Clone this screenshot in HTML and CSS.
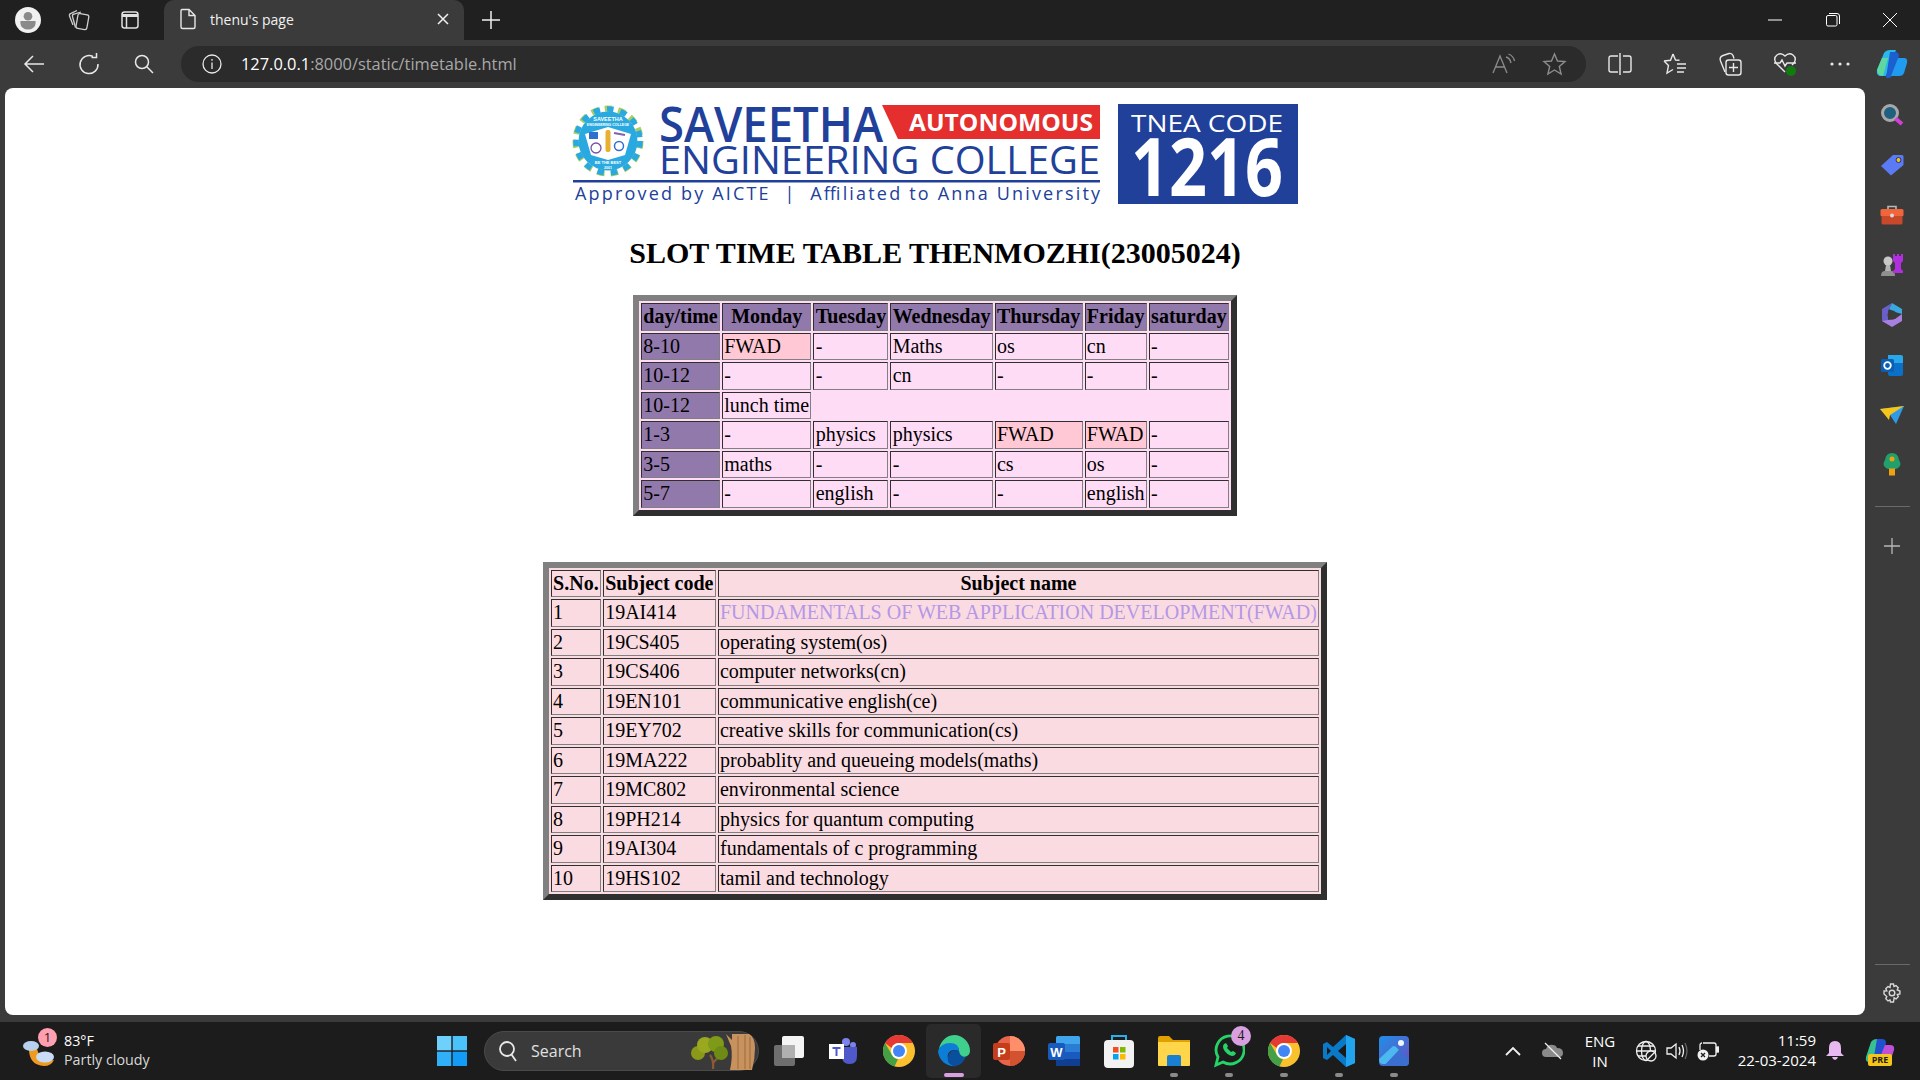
FILE: index.html
```html
<!DOCTYPE html>
<html lang="en">
<head>
    <meta charset="UTF-8">
    <title>thenu's page</title>
    <link rel="stylesheet" href="styles.css">
</head>
<body>
<!-- title bar -->
<div class="titlebar">
    <div class="bar-btn"><svg width="26" height="26" viewBox="0 0 24 24"><circle cx="12" cy="12" r="12" fill="#f1f1f1"/><circle cx="12" cy="8.500" r="4" fill="#8a8a8a"/><path d="M5 13h14v2a6 5 0 0 1-14 0z" fill="#8a8a8a"/></svg></div>
    <div class="bar-btn"><svg width="24" height="24" viewBox="0 0 24 24" fill="none" stroke="#cfcfcf" stroke-width="1.300"><rect x="10" y="6" width="11" height="15" rx="2" transform="rotate(10 15 13)"/><path d="M8.500 19.500 5.500 8.500Q5 6.500 7 6L14 4M6 17 2.500 8Q2 6 4 5.300L10 2.500"/></svg></div>
    <div class="bar-btn"><svg width="20" height="20" viewBox="0 0 20 20" fill="none" stroke="#e0e0e0" stroke-width="1.500"><rect x="2" y="2" width="16" height="16" rx="2.500"/><path d="M2 5.500h16" stroke-width="3"/><path d="M6.500 6v12"/></svg></div>
    <div class="tab">
        <svg width="18" height="22" viewBox="0 0 18 22" fill="none" stroke="#e8e8e8" stroke-width="1.400"><path d="M3 1.500h7l6 6V19a1.500 1.500 0 0 1-1.500 1.500h-11A1.500 1.500 0 0 1 2 19V3a1.500 1.500 0 0 1 1-1.500zM10 1.500V7.500h6"/></svg>
        <span class="tab-title">thenu's page</span>
        <svg class="tab-close" width="12" height="12" viewBox="0 0 12 12" stroke="#f0f0f0" stroke-width="1.500"><path d="M1 1l10 10M11 1 1 11"/></svg>
    </div>
    <div class="new-tab"><svg width="20" height="20" viewBox="0 0 20 20" stroke="#f0f0f0" stroke-width="1.500"><path d="M10 1v18M1 10h18"/></svg></div>
    <div class="win-controls">
        <div class="win-btn"><svg width="14" height="14" viewBox="0 0 14 14" stroke="#fff"><path d="M0 7h14"/></svg></div>
        <div class="win-btn"><svg width="14" height="14" viewBox="0 0 14 14" fill="none" stroke="#fff"><rect x="0.500" y="2.500" width="10.500" height="10.500" rx="1.500"/><path d="M3 .5h8a2.500 2.500 0 0 1 2.500 2.500v8"/></svg></div>
        <div class="win-btn"><svg width="14" height="14" viewBox="0 0 14 14" stroke="#fff"><path d="M0 0l14 14M14 0 0 14"/></svg></div>
    </div>
</div>

<!-- address bar -->
<div class="toolbar">
    <div class="tool-btn"><svg width="22" height="20" viewBox="0 0 22 20" fill="none" stroke="#e8e8e8" stroke-width="1.500"><path d="M21 10H2M10 2l-8 8 8 8"/></svg></div>
    <div class="tool-btn"><svg width="22" height="22" viewBox="0 0 22 22" fill="none" stroke="#e8e8e8" stroke-width="1.500"><path d="M15 3.500A9 9 0 1 0 20 11"/><path d="M15.500 0v5h-5" transform="translate(3 -.5)"/></svg></div>
    <div class="tool-btn"><svg width="20" height="20" viewBox="0 0 20 20" fill="none" stroke="#e8e8e8" stroke-width="1.500"><circle cx="8" cy="8" r="6.500"/><path d="M12.800 12.800 19 19"/></svg></div>
    <div class="address">
        <svg width="20" height="20" viewBox="0 0 20 20" fill="none" stroke="#e8e8e8" stroke-width="1.300"><circle cx="10" cy="10" r="9"/><path d="M10 8.500V15M10 5v1.800"/></svg>
        <span class="url"><span class="url-host">127.0.0.1</span>:8000/static/timetable.html</span>
        <div class="address-right">
            <svg width="24" height="22" viewBox="0 0 24 22" fill="none" stroke="#8c8c8c" stroke-width="1.300"><path d="M1 20 8 3l7 17M3.500 14h9M14 4q4 1 5 6M16.500 1q5 2 6 7"/></svg>
            <svg width="25" height="24" viewBox="0 0 25 24" fill="none" stroke="#8c8c8c" stroke-width="1.400"><path d="M12.500 2l3 7 7.500.6-5.700 4.900 1.800 7.500-6.600-4-6.600 4 1.800-7.500L2 9.600 9.500 9z"/></svg>
        </div>
    </div>
    <div class="tool-right">
        <div class="tool-btn"><svg width="24" height="22" viewBox="0 0 24 22" fill="none" stroke="#e8e8e8" stroke-width="1.400"><path d="M10 3H3a2 2 0 0 0-2 2v12a2 2 0 0 0 2 2h7M12 0v22M15 3h6a2 2 0 0 1 2 2v12a2 2 0 0 1-2 2h-6"/></svg></div>
        <div class="tool-btn"><svg width="24" height="24" viewBox="0 0 24 24" fill="none" stroke="#e8e8e8" stroke-width="1.400"><path d="M10 2l2.500 6 4 .3M1 9l6.500-.7L10 2M1 9l4.500 4.500L4 21l6-3.500M14 12h9M14 16h9M14 20h7"/></svg></div>
        <div class="tool-btn"><svg width="24" height="24" viewBox="0 0 24 24" fill="none" stroke="#e8e8e8" stroke-width="1.400"><path d="M7 20 2.500 9Q1 5 5 3.500L11 1.500q3-.5 4 2l1 3"/><rect x="8" y="8" width="15" height="15" rx="2.500"/><path d="M15.500 11v9M11 15.500h9"/></svg></div>
        <div class="tool-btn"><svg width="26" height="26" viewBox="0 0 26 26" fill="none" stroke="#e8e8e8" stroke-width="1.400"><path d="M13 21 4 12Q1 7 5 4t8 1q4-4 8-1t1 8l-2 2"/><path d="M2 12h6l2-3 3 6 2-3h9"/><circle cx="19" cy="20" r="5" fill="#107c10" stroke="none"/></svg></div>
        <div class="tool-btn"><svg width="20" height="4" viewBox="0 0 20 4" fill="#e8e8e8"><circle cx="2" cy="2" r="1.600"/><circle cx="10" cy="2" r="1.600"/><circle cx="18" cy="2" r="1.600"/></svg></div>
        <div class="copilot-btn"><svg width="32" height="28" viewBox="0 0 32 28"><path d="M8 3q2-3 6-3h6L10 26H5Q0 26 1 20z" fill="#2bb8e8"/><path d="M1 20 6 8h6l-5 18Q2 26 1 20z" fill="#5fd8a0"/><path d="M14 2h5q4 0 4 4l-7 20q-1 2-5 2h-1z" fill="#1b5fd0"/><path d="M22 8h6q4 0 3 5l-3 10q-1 3-5 3h-8z" fill="#1f9cf0"/></svg></div>
    </div>
</div>

<div class="middle">
    <!-- the page itself -->
    <main class="page">
        <div class="logo">
            <svg class="logo-svg" width="726" height="100" viewBox="0 0 726 100">
                <!-- emblem -->
                <circle cx="36" cy="37" r="32.500" fill="none" stroke="#a8cf60" stroke-width="6" stroke-dasharray="7.500 6.100"/>
                <circle cx="36" cy="37" r="32" fill="none" stroke="#29a9e0" stroke-width="5.500" stroke-dasharray="6.500 7.100"/>
                <circle cx="36" cy="37" r="29.500" fill="#29a9e0"/>
                <path d="M13 30l23-7 23 7-6 21-17 5-17-5z" fill="#fff"/>
                <rect x="17" y="28" width="9" height="7" fill="#2f6fd0"/>
                <rect x="33.500" y="26" width="5" height="22" rx="2" fill="#e8b030"/>
                <circle cx="24" cy="44" r="5" fill="none" stroke="#7a4fa8" stroke-width="1.300"/>
                <circle cx="47" cy="42" r="4.500" fill="none" stroke="#2f6fd0" stroke-width="1.500"/>
                <path d="M42 29l11 2" stroke="#8060b0" stroke-width="2"/>
                <text class="logo-tiny" x="36" y="16.500" font-size="5.500">SAVEETHA</text>
                <text class="logo-tiny" x="36" y="22" font-size="3.500">ENGINEERING COLLEGE</text>
                <text class="logo-tiny" x="36" y="60" font-size="4">BE THE BEST</text>
                <text class="logo-tiny" x="36" y="65" font-size="3.500">2001</text>
                <!-- name -->
                <text class="logo-big logo-name" x="87" y="38" font-size="49" textLength="224" lengthAdjust="spacingAndGlyphs">SAVEETHA</text>
                <path d="M310 1H528V35H326z" fill="#e52e2e"/>
                <text class="logo-auto" x="337" y="27" textLength="184" lengthAdjust="spacingAndGlyphs">AUTONOMOUS</text>
                <text class="logo-big" x="87" y="70" font-size="38" textLength="441" lengthAdjust="spacingAndGlyphs">ENGINEERING COLLEGE</text>
                <rect x="1" y="76" width="527" height="2.500" fill="#21409a"/>
                <text class="logo-small" x="3" y="96" textLength="525" lengthAdjust="spacing">Approved by AICTE  |  Affiliated to Anna University</text>
                <!-- code box -->
                <rect x="546" y="0" width="180" height="100" fill="#21409a"/>
                <text class="logo-code" x="559" y="28" textLength="152" lengthAdjust="spacingAndGlyphs">TNEA CODE</text>
                <text class="logo-num" x="559" y="92" textLength="152" lengthAdjust="spacingAndGlyphs">1216</text>
            </svg>
        </div>
        <h1 class="heading">SLOT TIME TABLE THENMOZHI(23005024)</h1>

        <table class="slots">
            <tr>
                <th>day/time</th><th>Monday</th><th>Tuesday</th><th>Wednesday</th><th>Thursday</th><th>Friday</th><th>saturday</th>
            </tr>
            <tr>
                <td class="slot-time">8-10</td><td class="fwad">FWAD</td><td>-</td><td>Maths</td><td>os</td><td>cn</td><td>-</td>
            </tr>
            <tr>
                <td class="slot-time">10-12</td><td>-</td><td>-</td><td>cn</td><td>-</td><td>-</td><td>-</td>
            </tr>
            <tr>
                <td class="slot-time">10-12</td><td>lunch time</td>
            </tr>
            <tr>
                <td class="slot-time">1-3</td><td>-</td><td>physics</td><td>physics</td><td class="fwad">FWAD</td><td class="fwad">FWAD</td><td>-</td>
            </tr>
            <tr>
                <td class="slot-time">3-5</td><td>maths</td><td>-</td><td>-</td><td>cs</td><td>os</td><td>-</td>
            </tr>
            <tr>
                <td class="slot-time">5-7</td><td>-</td><td>english</td><td>-</td><td>-</td><td>english</td><td>-</td>
            </tr>
        </table>

        <table class="subjects">
            <tr><th>S.No.</th><th>Subject code</th><th>Subject name</th></tr>
            <tr><td>1</td><td>19AI414</td><td class="subject-main">FUNDAMENTALS OF WEB APPLICATION DEVELOPMENT(FWAD)</td></tr>
            <tr><td>2</td><td>19CS405</td><td>operating system(os)</td></tr>
            <tr><td>3</td><td>19CS406</td><td>computer networks(cn)</td></tr>
            <tr><td>4</td><td>19EN101</td><td>communicative english(ce)</td></tr>
            <tr><td>5</td><td>19EY702</td><td>creative skills for communication(cs)</td></tr>
            <tr><td>6</td><td>19MA222</td><td>probablity and queueing models(maths)</td></tr>
            <tr><td>7</td><td>19MC802</td><td>environmental science</td></tr>
            <tr><td>8</td><td>19PH214</td><td>physics for quantum computing</td></tr>
            <tr><td>9</td><td>19AI304</td><td>fundamentals of c programming</td></tr>
            <tr><td>10</td><td>19HS102</td><td>tamil and technology</td></tr>
        </table>
    </main>

    <!-- edge sidebar -->
    <aside class="sidebar">
        <div class="side-btn"><svg width="24" height="24" viewBox="0 0 24 24"><circle cx="10" cy="10" r="7.500" fill="#1f5f80" stroke="#a8a8a8" stroke-width="3"/><path d="M15.500 15.500 22 21" stroke="#d040d8" stroke-width="4"/></svg></div>
        <div class="side-btn"><svg width="24" height="22" viewBox="0 0 24 22"><path d="M13 1h9a1.500 1.500 0 0 1 1.500 1.500V11L11 21.500 1 12z" fill="#5b7bf5"/><circle cx="18.500" cy="6" r="2.500" fill="#f0c020" stroke="#203080"/></svg></div>
        <div class="side-btn"><svg width="24" height="22" viewBox="0 0 24 22"><path d="M8 5V2.500h8V5" fill="none" stroke="#b8b8b8" stroke-width="1.600"/><rect x="0.500" y="5" width="23" height="7.500" rx="1.500" fill="#f0653a"/><rect x="1.500" y="12" width="21" height="8.500" rx="1.500" fill="#c8482a"/><circle cx="12" cy="11.500" r="2" fill="#d8d8d8"/></svg></div>
        <div class="side-btn"><svg width="24" height="24" viewBox="0 0 24 24"><circle cx="8" cy="8" r="4.500" fill="#c8c8c8"/><path d="M6 12h4l1 6H5z" fill="#b4b4b4"/><path d="M1 23q0-5 4-5h6q4 0 4 5z" fill="#909090"/><path d="M13 1h2v2h2V1h2v2h2V1h2v7l-2 2v6l2 2v2H13v-2l2-2v-6l-2-2z" fill="#b030e0"/></svg></div>
        <div class="side-btn"><svg width="22" height="24" viewBox="0 0 22 24"><path d="M11 0 21 6v5l-7-2-6-3z" fill="#38a8e0"/><path d="M11 0 1 6v12l6 3V8z" fill="#6a5fc8"/><path d="M1 18l10 6 10-6v-7l-7 5-7 1z" fill="#a880e0"/><circle cx="11" cy="12" r="4.500" fill="#3b3b3b"/></svg></div>
        <div class="side-btn"><svg width="22" height="22" viewBox="0 0 22 22"><path d="M7 1h13a2 2 0 0 1 2 2v6H7z" fill="#28a8ea"/><path d="M7 9h15v11a2 2 0 0 1-2 2H9a2 2 0 0 1-2-2z" fill="#0a70c8"/><rect x="0" y="5" width="13" height="13" rx="1.500" fill="#0a5fb4"/><circle cx="6.500" cy="11.500" r="3.300" fill="none" stroke="#fff" stroke-width="1.800"/></svg></div>
        <div class="side-btn"><svg width="24" height="18" viewBox="0 0 24 18"><path d="M0 3 24 0 16 18 10 9z" fill="#2e9be8"/><path d="M0 3 24 0 10 9 9 14z" fill="#f5c518"/></svg></div>
        <div class="side-btn"><svg width="20" height="24" viewBox="0 0 20 24"><path d="M10 0q6 0 7 7 4 6-3 9H6q-7-3-3-9 1-7 7-7z" fill="#22a06b"/><rect x="7" y="15.500" width="6" height="7" fill="#f0a010"/><circle cx="10" cy="6" r="2.500" fill="#f0a010"/></svg></div>
        <div class="side-line"></div>
        <div class="side-btn"><svg width="16" height="16" viewBox="0 0 16 16" stroke="#b8b8b8" stroke-width="1.300"><path d="M8 0v16M0 8h16"/></svg></div>
        <div class="side-line side-bottom"></div>
        <div class="side-btn"><svg width="20" height="20" viewBox="0 0 20 20" fill="none" stroke="#d8d8d8" stroke-width="1.400"><circle cx="10" cy="10" r="2.800"/><path d="M8.500 1h3l.5 2.500 2-.9 2.200 2.100-1 2.100L17.900 8v3l-2.600.6 1 2.100-2.200 2.200-2-1L11.500 19h-3L8 16.900l-2 1-2.200-2.200 1-2.100L2 11V8l2.800-.2-1-2.100L6 3.600l2 .9z"/></svg></div>
    </aside>
</div>

<!-- windows taskbar -->
<footer class="taskbar">
    <div class="weather">
        <div class="weather-icon">
            <svg width="34" height="36" viewBox="0 0 34 36"><path d="M6 16q0 16 15 17 7 0 10-6-14 2-17-11z" fill="#f09a20"/><ellipse cx="8" cy="13" rx="8" ry="5" fill="#b8d0f0"/><ellipse cx="22" cy="24" rx="9" ry="5.500" fill="#c8dcf8"/></svg>
            <span class="weather-badge">1</span>
        </div>
        <div class="weather-text">
            <div class="weather-temp">83°F</div>
            <div class="weather-desc">Partly cloudy</div>
        </div>
    </div>
    <div class="task-item"><svg width="30" height="30" viewBox="0 0 30 30"><rect width="14.300" height="14.300" fill="#6fd0fb"/><rect x="15.700" width="14.300" height="14.300" fill="#4cc2fa"/><rect y="15.700" width="14.300" height="14.300" fill="#2fb0f8"/><rect x="15.700" y="15.700" width="14.300" height="14.300" fill="#129cf5"/></svg></div>
    <div class="search-pill">
        <svg width="20" height="22" viewBox="0 0 20 22" fill="none" stroke="#e8e8e8" stroke-width="1.800"><circle cx="9" cy="9" r="7"/><path d="M13.500 14.500 18 21"/></svg>
        <span class="search-text">Search</span>
        <svg class="search-art" width="68" height="38" viewBox="0 0 68 38"><path d="M24 37q1-9-3-14M24 31l9-10" stroke="#8a5a30" stroke-width="2.200" fill="none"/><circle cx="9" cy="21" r="7" fill="#8a9a18"/><circle cx="16" cy="13" r="8" fill="#9aa820"/><circle cx="27" cy="12" r="8" fill="#7e9a18"/><circle cx="32" cy="21" r="7" fill="#6e8c14"/><path d="M37 2l6 6V2h17q6 3 6 14t-3 22H41q3-14 1-24z" fill="#c8925e"/><path d="M49 4v33M56 3v34M61 5v32" stroke="#a87444" stroke-width="1.300"/></svg>
    </div>
    <div class="task-apps">
        <div class="task-item"><svg width="30" height="30" viewBox="0 0 30 30"><rect x="0" y="9" width="21" height="21" rx="2" fill="#6e6e6e"/><rect x="8" y="0" width="22" height="22" rx="2" fill="#f4f4f4"/><rect x="8" y="9" width="13" height="13" fill="#b0b0b0"/></svg></div>
        <div class="task-item"><svg width="30" height="30" viewBox="0 0 30 30"><circle cx="24" cy="9" r="3" fill="#7b83eb"/><circle cx="17" cy="6" r="4" fill="#7b83eb"/><path d="M10 11h18v9q0 8-7 8t-8-6z" fill="#5059c9"/><rect x="0" y="8" width="15" height="15" fill="#fff"/><path d="M3.500 11h8v2h-3v7h-2v-7h-3z" fill="#5059c9"/></svg></div>
        <div class="task-item"><svg class="chrome" width="32" height="32" viewBox="0 0 32 32"><circle cx="16" cy="16" r="16" fill="#fbc02d"/><path d="M16 0a16 16 0 0 1 13.900 8H16a8 8 0 0 0-7.400 5L2.100 8A16 16 0 0 1 16 0z" fill="#e53935"/><path d="M2.100 8 9 20a8 8 0 0 0 6 4l-3.500 7.400A16 16 0 0 1 2.100 8z" fill="#43a047"/><circle cx="16" cy="16" r="8" fill="#fff"/><circle cx="16" cy="16" r="6" fill="#4285f4"/></svg></div>
        <div class="task-item task-active"><svg width="34" height="34" viewBox="0 0 34 34"><path d="M17 1a16 16 0 0 1 16 16q0 5-6 6-6 0-5-6 0-5-7-6-8 0-13 7A16 16 0 0 1 17 1z" fill="#3ed08c"/><path d="M1 17q3-8 12-8 9 0 9 8-8-3-11 3-2 7 8 12A16 16 0 0 1 1 17z" fill="#0c7ed8"/><path d="M11 22q3-8 11-5 1 6 7 6-5 10-13 9-7-3-5-10z" fill="#0a4f9e"/></svg></div>
        <div class="task-item"><svg width="32" height="32" viewBox="0 0 32 32"><circle cx="17" cy="16" r="15" fill="#e8644a"/><path d="M17 1a15 15 0 0 1 15 15H17z" fill="#ff8f6b"/><path d="M17 16h15a15 15 0 0 1-15 15z" fill="#d35230"/><rect x="0" y="8" width="17" height="17" rx="2" fill="#c43e1c"/><text class="app-letter" x="8.500" y="21.500">P</text></svg></div>
        <div class="task-item"><svg width="32" height="32" viewBox="0 0 32 32"><rect x="8" y="1" width="24" height="30" rx="1.500" fill="#41a5ee"/><rect x="8" y="9" width="24" height="8" fill="#2b7cd3"/><rect x="8" y="17" width="24" height="7" fill="#185abd"/><rect x="8" y="24" width="24" height="7" fill="#103f91"/><rect x="0" y="8" width="17" height="17" rx="2" fill="#185abd"/><text class="app-letter" x="8.500" y="21.500">W</text></svg></div>
        <div class="task-item"><svg width="30" height="34" viewBox="0 0 30 34"><path d="M8 7V2h14v5" fill="none" stroke="#2ab0e8" stroke-width="2"/><rect x="0" y="6" width="30" height="28" rx="4" fill="#f2f2f2"/><rect x="9" y="13" width="5.500" height="5.500" fill="#f25022"/><rect x="16" y="13" width="5.500" height="5.500" fill="#7fba00"/><rect x="9" y="20" width="5.500" height="5.500" fill="#00a4ef"/><rect x="16" y="20" width="5.500" height="5.500" fill="#ffb900"/></svg></div>
        <div class="task-item task-open"><svg width="32" height="30" viewBox="0 0 32 30"><path d="M0 2q0-2 2-2h9l4 4h17v26H0z" fill="#e0a000"/><path d="M0 6h32v22q0 2-2 2H2q-2 0-2-2z" fill="#ffd54a"/><path d="M9 21q0-2 2-2h10q2 0 2 2v9H9z" fill="#1a7fd0"/></svg></div>
        <div class="task-item task-open">
            <svg width="32" height="34" viewBox="0 0 32 34" fill="none"><path d="M3 31l2-8A14 14 0 1 1 10 28z" stroke="#25d366" stroke-width="2.800"/><path d="M11 10q-2 2 0 6 3 5 8 6 3 0 4-3l-3-2-2 1-4-4 1-2-2-3z" fill="#25d366"/></svg>
            <span class="task-badge">4</span>
        </div>
        <div class="task-item task-open"><svg class="chrome" width="32" height="32" viewBox="0 0 32 32"><circle cx="16" cy="16" r="16" fill="#fbc02d"/><path d="M16 0a16 16 0 0 1 13.900 8H16a8 8 0 0 0-7.400 5L2.100 8A16 16 0 0 1 16 0z" fill="#e53935"/><path d="M2.100 8 9 20a8 8 0 0 0 6 4l-3.500 7.400A16 16 0 0 1 2.100 8z" fill="#43a047"/><circle cx="16" cy="16" r="8" fill="#fff"/><circle cx="16" cy="16" r="6" fill="#4285f4"/></svg></div>
        <div class="task-item task-open"><svg width="32" height="32" viewBox="0 0 32 32"><path d="M23 0 32 4v24l-9 4-13-12-6 5-4-2V9l4-2 6 5z" fill="#0a7ac8"/><path d="M23 0 32 4v24l-9 4z" fill="#22a3ee"/><path d="M23 9v14l-8-7z" fill="#1a1a1a"/><path d="M4 12v8l4-4z" fill="#1a1a1a"/></svg></div>
        <div class="task-item task-open"><svg width="30" height="30" viewBox="0 0 30 30"><defs><linearGradient id="photoBg" x1="0" y1="0" x2="1" y2="1"><stop offset="0" stop-color="#1f8fe8"/><stop offset="1" stop-color="#6a4fc0"/></linearGradient></defs><rect width="30" height="30" rx="4" fill="url(#photoBg)"/><path d="M0 23 13 11q2-2 4 0l3 3L7 28H4q-4 0-4-5z" fill="#4cb8f0"/><path d="M20 14l10 9v3q0 4-4 4H5z" fill="#3a6fd0"/><circle cx="22" cy="7" r="3" fill="#eef6ff"/></svg></div>
    </div>
    <div class="tray">
        <div class="tray-item tray-chevron"><svg width="16" height="10" viewBox="0 0 16 10" fill="none" stroke="#f0f0f0" stroke-width="1.800"><path d="M1 9l7-7 7 7"/></svg></div>
        <div class="tray-item tray-cloud"><svg width="22" height="18" viewBox="0 0 22 18"><path d="M4 15a4 4 0 0 1 0-8q2-5 7-4 3 0 4 3 6 0 6 5 0 4-4 4z" fill="#8a8a8a"/><path d="M3 1l16 16" stroke="#f0f0f0" stroke-width="1.300"/></svg></div>
        <div class="tray-lang"><div>ENG</div><div>IN</div></div>
        <div class="tray-item tray-globe"><svg width="22" height="22" viewBox="0 0 22 22" fill="none" stroke="#f0f0f0" stroke-width="1.300"><circle cx="11" cy="11" r="9.500"/><ellipse cx="11" cy="11" rx="4.500" ry="9.500"/><path d="M1.500 11h19M3 6h16M3 16h8"/><circle cx="16" cy="16" r="5" fill="#1c1c1c"/><path d="M13 19l6-6"/></svg></div>
        <div class="tray-item tray-volume"><svg width="22" height="20" viewBox="0 0 22 20" fill="none" stroke="#f0f0f0" stroke-width="1.300"><path d="M1 7h4l5-4v14l-5-4H1zM13 6q2 4 0 8M16 4q3 6 0 12"/><path d="M19 2q4 8 0 16" stroke="#666"/></svg></div>
        <div class="tray-item tray-battery"><svg width="22" height="20" viewBox="0 0 22 20" fill="none" stroke="#f0f0f0" stroke-width="1.300"><path d="M6 2h11a2 2 0 0 1 2 2v9a2 2 0 0 1-2 2h-5M3 9V4a2 2 0 0 1 2-2"/><rect x="19.500" y="6" width="2" height="5" fill="#f0f0f0"/><circle cx="6" cy="14" r="5.500" fill="#f0f0f0" stroke="none"/><path d="M4 12l4 4M8 12l-4 4" stroke="#1c1c1c"/></svg></div>
        <div class="clock"><div>11:59</div><div>22-03-2024</div></div>
        <div class="tray-item tray-bell"><svg width="18" height="20" viewBox="0 0 18 20"><path d="M9 0q6 0 6 7v5l3 3H0l3-3V7q0-7 6-7z" fill="#e8b8f0"/><path d="M6 16h6q-1 3-3 3t-3-3z" fill="#e8b8f0"/></svg></div>
        <div class="tray-item tray-pre">
            <svg width="30" height="26" viewBox="0 0 30 26"><path d="M6 4q2-3 6-3h4L8 24H4Q0 24 1 19z" fill="#38c090"/><path d="M12 1h5q4 0 4 4l-5 19h-8z" fill="#2050d0"/><path d="M20 7h5q5 0 4 5l-3 9q-1 3-5 3h-8z" fill="#c050d8"/></svg>
            <span class="pre-badge">PRE</span>
        </div>
    </div>
</footer>
</body>
</html>
```

FILE: styles.css
```css
*{
    margin: 0;
    padding: 0;
    box-sizing: border-box;
}
html,body{
    width: 100%;
    height: 100%;
    overflow: hidden;
}
body{
    display: flex;
    flex-direction: column;
    background: #3b3b3b;
    font-family: "Open Sans", "Liberation Sans", sans-serif;
    color: #fff;
}
svg{
    display: block;
    flex: none;
}

/* title bar */
.titlebar{
    height: 40px;
    flex: none;
    display: flex;
    align-items: center;
    padding-left: 2px;
    background: #202020;
}
.bar-btn{
    width: 51px;
    display: flex;
    justify-content: center;
}
.tab{
    width: 300px;
    height: 40px;
    margin-left: 9px;
    display: flex;
    align-items: center;
    padding: 0 15px 2px;
    gap: 13px;
    background: #3b3b3b;
    border-radius: 10px 10px 0 0;
}
.tab-title{
    font-size: 14px;
    color: #f0f0f0;
}
.tab-close{
    margin-left: auto;
}
.new-tab{
    width: 54px;
    display: flex;
    justify-content: center;
}
.win-controls{
    display: flex;
    margin-left: auto;
    padding-right: 1px;
}
.win-btn{
    width: 57.5px;
    display: flex;
    justify-content: center;
}

/* toolbar */
.toolbar{
    height: 48px;
    flex: none;
    display: flex;
    align-items: center;
    padding-left: 6px;
}
.tool-btn{
    width: 55px;
    display: flex;
    justify-content: center;
    align-items: center;
}
.address{
    flex: 1;
    height: 36px;
    margin-left: 10px;
    display: flex;
    align-items: center;
    padding-left: 21px;
    background: #2b2b2b;
    border-radius: 18px;
}
.url{
    margin: -2px 0 0 19px;
    font-size: 16.4px;
    color: #a8a8a8;
}
.url-host{
    color: #fff;
}
.address-right{
    margin-left: auto;
    display: flex;
    align-items: center;
    gap: 26px;
    padding-right: 19px;
}
.tool-right{
    display: flex;
    align-items: center;
    margin-left: 6px;
}
.copilot-btn{
    width: 53px;
    padding-right: 4px;
    display: flex;
    justify-content: center;
}

.middle{
    flex: 1;
    display: flex;
    min-height: 0;
}

/* page */
.page{
    flex: 1;
    margin: 0 0 7px 5px;
    display: flex;
    flex-direction: column;
    align-items: center;
    padding-top: 16px;
    background: #fff;
    border-radius: 8px;
    font-family: "Liberation Serif", serif;
    color: #000;
}
.logo-svg{
    overflow: visible;
}
.logo text{
    font-family: "Open Sans", "Liberation Sans", sans-serif;
}
.logo .logo-tiny{
    font-family: "Liberation Sans", sans-serif;
    font-weight: 700;
    fill: #fff;
    text-anchor: middle;
}
.logo-big{
    font-weight: 500;
    fill: #21409a;
}
.logo-name{
    font-weight: 600;
}
.logo-auto{
    font-size: 24px;
    font-weight: 700;
    fill: #fff;
}
.logo-small{
    font-size: 18px;
    font-weight: 500;
    fill: #21409a;
    white-space: pre;
}
.logo-code{
    font-size: 24px;
    font-weight: 500;
    fill: #fff;
}
.logo-num{
    font-size: 80px;
    font-weight: 700;
    fill: #fff;
}
.heading{
    margin-top: 30px;
    font-size: 30px;
    line-height: 37px;
    font-weight: bold;
}
table{
    border: 6px solid;
    border-color: #808080 #2f2f2f #2f2f2f #808080;
    border-spacing: 2.5px;
    font-size: 20px;
}
th,td{
    padding: 1.25px;
    border: 1px solid;
    border-color: #2f2f2f #808080 #808080 #2f2f2f;
}
td{
    text-align: left;
}
.slots{
    margin-top: 24px;
    background: #fedcf5;
}
.slots th,.slot-time{
    background: #9279ab;
}
.fwad{
    background: #ffc8d4;
}
.subjects{
    margin-top: 46px;
    background: #fadbe1;
}
.subject-main{
    color: #b497e7;
}

/* sidebar */
.sidebar{
    width: 55px;
    flex: none;
    display: flex;
    flex-direction: column;
    align-items: center;
    padding: 2px 1px 4px 0;
}
.side-btn{
    height: 50px;
    display: flex;
    align-items: center;
    justify-content: center;
    flex: none;
}
.side-line{
    width: 35px;
    height: 1px;
    margin: 16px 0 14px;
    background: #6a6a6a;
}
.side-bottom{
    margin: auto 0 3px;
}

/* taskbar */
.taskbar{
    height: 58px;
    flex: none;
    display: flex;
    align-items: center;
    background: #1c1c1c;
}
.weather{
    width: 424px;
    flex: none;
    display: flex;
    align-items: center;
    padding-left: 23px;
    gap: 7px;
}
.weather-icon{
    position: relative;
}
.weather-badge{
    position: absolute;
    left: 15px;
    top: -5px;
    width: 19px;
    height: 19px;
    border-radius: 50%;
    background: #ff9fb0;
    color: #1c1c1c;
    font-size: 13px;
    line-height: 19px;
    text-align: center;
}
.weather-text{
    margin-top: -2px;
    font-size: 14.3px;
    line-height: 19px;
}
.weather-desc{
    color: #d8d8d8;
}
.task-item{
    position: relative;
    width: 55px;
    height: 54px;
    flex: none;
    display: flex;
    align-items: center;
    justify-content: center;
}
.task-active{
    background: #2a2a2a;
    border-radius: 5px;
}
.task-active::after,.task-open::after{
    content: "";
    position: absolute;
    bottom: 1px;
    left: 50%;
    width: 8px;
    height: 4px;
    margin-left: -4px;
    border-radius: 2px;
    background: #8a8a8a;
}
.task-active::after{
    width: 20px;
    margin-left: -10px;
    background: #d8a0e0;
}
.task-badge{
    position: absolute;
    right: 5px;
    top: 2px;
    width: 20px;
    height: 20px;
    border-radius: 50%;
    background: #d8a0e0;
    color: #1c1c1c;
    font-family: "Liberation Serif", serif;
    font-size: 14px;
    line-height: 20px;
    text-align: center;
}
.app-letter{
    font-family: "Liberation Sans", sans-serif;
    font-size: 13px;
    font-weight: 700;
    fill: #fff;
    text-anchor: middle;
}
.search-pill{
    width: 275px;
    height: 40px;
    flex: none;
    margin: 0 2px 0 5px;
    display: flex;
    align-items: center;
    padding: 0 1px 0 13px;
    gap: 13px;
    background: #3a3a3a;
    border: 1px solid #4a4a4a;
    border-radius: 20px;
}
.search-text{
    margin-top: -1px;
    font-size: 16px;
    color: #e0e0e0;
}
.search-art{
    margin-left: auto;
}
.task-apps{
    display: flex;
}
.tray{
    margin-left: auto;
    padding-right: 12px;
    display: flex;
    align-items: center;
}
.tray-item{
    display: flex;
    justify-content: center;
}
.tray-chevron{
    width: 40px;
    padding-left: 4px;
}
.tray-cloud{
    width: 42px;
    padding-left: 2px;
}
.tray-lang{
    width: 52px;
    padding-left: 2px;
    font-size: 15px;
    line-height: 20px;
    text-align: center;
}
.tray-globe{
    width: 38px;
    padding-left: 4px;
}
.tray-volume{
    width: 26px;
    padding-left: 2px;
}
.tray-battery{
    width: 38px;
}
.clock{
    width: 89px;
    margin-top: -2px;
    font-size: 15px;
    line-height: 20px;
    text-align: right;
    white-space: nowrap;
}
.tray-bell{
    width: 36px;
    padding-left: 2px;
}
.tray-pre{
    position: relative;
    width: 56px;
}
.pre-badge{
    position: absolute;
    left: 16px;
    top: 16px;
    width: 24px;
    height: 12px;
    background: #f5c518;
    border-radius: 2px;
    color: #1c1c1c;
    font-size: 9px;
    font-weight: 700;
    line-height: 12px;
    text-align: center;
}
```
